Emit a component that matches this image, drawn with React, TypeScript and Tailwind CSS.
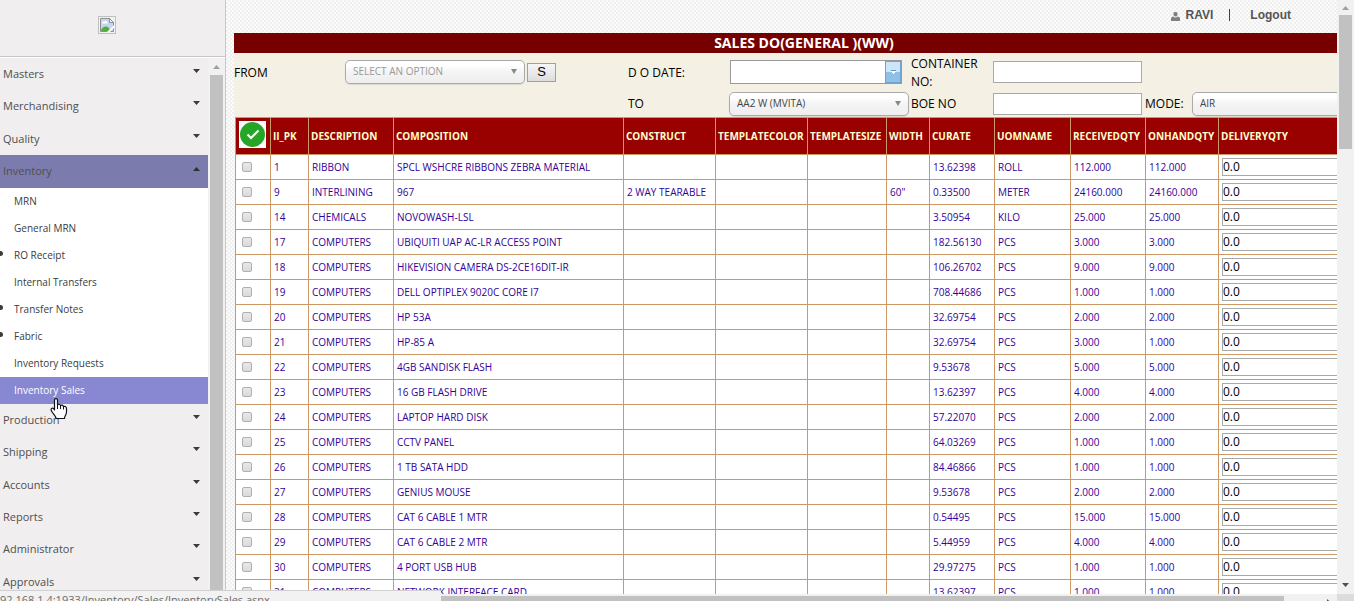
import React from "react";

const topMenu = ["Masters", "Merchandising", "Quality"];
const bottomMenu = ["Production", "Shipping", "Accounts", "Reports", "Administrator", "Approvals"];
const inventoryMenu = [
  { label: "MRN" },
  { label: "General MRN" },
  { label: "RO Receipt", dot: true },
  { label: "Internal Transfers" },
  { label: "Transfer Notes", dot: true },
  { label: "Fabric", dot: true },
  { label: "Inventory Requests" },
  { label: "Inventory Sales", active: true },
];

const columns = [
  { name: "II_PK", width: "w-[38px]" },
  { name: "DESCRIPTION", width: "w-[85px]" },
  { name: "COMPOSITION", width: "w-[230px]" },
  { name: "CONSTRUCT", width: "w-[92px]" },
  { name: "TEMPLATECOLOR", width: "w-[92px]" },
  { name: "TEMPLATESIZE", width: "w-[79px]" },
  { name: "WIDTH", width: "w-[43px]" },
  { name: "CURATE", width: "w-[65px]" },
  { name: "UOMNAME", width: "w-[76px]" },
  { name: "RECEIVEDQTY", width: "w-[75px]" },
  { name: "ONHANDQTY", width: "w-[73px]" },
  { name: "DELIVERYQTY", width: "w-[180px]" },
];

const rows: string[][] = [
  ["1", "RIBBON", "SPCL WSHCRE RIBBONS ZEBRA MATERIAL", "", "", "", "", "13.62398", "ROLL", "112.000", "112.000"],
  ["9", "INTERLINING", "967", "2 WAY TEARABLE", "", "", '60"', "0.33500", "METER", "24160.000", "24160.000"],
  ["14", "CHEMICALS", "NOVOWASH-LSL", "", "", "", "", "3.50954", "KILO", "25.000", "25.000"],
  ["17", "COMPUTERS", "UBIQUITI UAP AC-LR ACCESS POINT", "", "", "", "", "182.56130", "PCS", "3.000", "3.000"],
  ["18", "COMPUTERS", "HIKEVISION CAMERA DS-2CE16DIT-IR", "", "", "", "", "106.26702", "PCS", "9.000", "9.000"],
  ["19", "COMPUTERS", "DELL OPTIPLEX 9020C CORE I7", "", "", "", "", "708.44686", "PCS", "1.000", "1.000"],
  ["20", "COMPUTERS", "HP 53A", "", "", "", "", "32.69754", "PCS", "2.000", "2.000"],
  ["21", "COMPUTERS", "HP-85 A", "", "", "", "", "32.69754", "PCS", "3.000", "1.000"],
  ["22", "COMPUTERS", "4GB SANDISK FLASH", "", "", "", "", "9.53678", "PCS", "5.000", "5.000"],
  ["23", "COMPUTERS", "16 GB FLASH DRIVE", "", "", "", "", "13.62397", "PCS", "4.000", "4.000"],
  ["24", "COMPUTERS", "LAPTOP HARD DISK", "", "", "", "", "57.22070", "PCS", "2.000", "2.000"],
  ["25", "COMPUTERS", "CCTV PANEL", "", "", "", "", "64.03269", "PCS", "1.000", "1.000"],
  ["26", "COMPUTERS", "1 TB SATA HDD", "", "", "", "", "84.46866", "PCS", "1.000", "1.000"],
  ["27", "COMPUTERS", "GENIUS MOUSE", "", "", "", "", "9.53678", "PCS", "2.000", "2.000"],
  ["28", "COMPUTERS", "CAT 6 CABLE 1 MTR", "", "", "", "", "0.54495", "PCS", "15.000", "15.000"],
  ["29", "COMPUTERS", "CAT 6 CABLE 2 MTR", "", "", "", "", "5.44959", "PCS", "4.000", "4.000"],
  ["30", "COMPUTERS", "4 PORT USB HUB", "", "", "", "", "29.97275", "PCS", "1.000", "1.000"],
  ["31", "COMPUTERS", "NETWORK INTERFACE CARD", "", "", "", "", "13.62397", "PCS", "1.000", "1.000"],
];

function Triangle({ up = false, className = "" }: { up?: boolean; className?: string }) {
  return (
    <svg viewBox="0 0 7 4" className={`h-1 w-[7px] shrink-0 fill-current ${className}`} aria-hidden="true">
      <path d={up ? "M0 4L3.5 0L7 4Z" : "M0 0H7L3.5 4Z"} />
    </svg>
  );
}

function MenuItem({ label }: { label: string }) {
  return (
    <a href="#" className="flex items-center justify-between pr-2 pl-[3px] text-[11px] text-[#4f4f4f]">
      {label}
      <Triangle className="mb-1.5 text-[#3c3c3c]" />
    </a>
  );
}

function Picker({ id, value, muted = false }: { id: string; value: string; muted?: boolean }) {
  return (
    <div className="relative w-[180px] shrink-0">
      <select
        id={id}
        className={`block h-6 w-full appearance-none rounded-[5px] border border-[#aaaaaa] bg-linear-to-b from-white from-20% via-[#f4f4f4] via-50% to-[#eeeeee] pr-6 pb-0.5 pl-[7px] font-['Open_Sans',sans-serif] text-[10px] shadow-[0_1px_1px_rgba(0,0,0,0.1)] ${muted ? "text-[#999999]" : "text-[#444444]"}`}
      >
        <option>{value}</option>
      </select>
      <svg width="6" height="5" viewBox="0 0 6 5" className="pointer-events-none absolute top-[9px] right-2 fill-[#888888]" aria-hidden="true">
        <path d="M0 0H6L3 5Z" />
      </svg>
    </div>
  );
}

function BrokenImage() {
  return (
    <svg width="18" height="18" viewBox="0 0 18 18" role="img" aria-label="Logo">
      <rect x="0.5" y="0.5" width="17" height="17" fill="#f3f2f3" stroke="#c0c0c0" />
      <path d="M2.500 2.500H11.500L15.500 6.500V15.500H2.500Z" fill="#c3d7f5" stroke="#8f8f8f" />
      <path d="M4 7.500C4 5.500 6 5 6.500 5.500C8 4 10 5.500 9.500 7.500Z" fill="#fff" />
      <path d="M3 15C3.500 11 8 9.500 10.500 11.500L13 15Z" fill="#55ab3b" />
      <path d="M11.500 2.500V6.500H15.500Z" fill="#fff" stroke="#8f8f8f" />
      <path d="M9 16L16 9V12L12 16Z" fill="#f8f8f8" />
    </svg>
  );
}

function HandCursor() {
  return (
    <svg width="18" height="22" viewBox="0 0 18 22" className="pointer-events-none absolute top-[398px] left-[50px] z-20" aria-hidden="true">
      <path
        d="M4.500 12V2C4.500 .2 7.500 .2 7.500 2V7C8 5.800 10.300 6 10.500 7.800C11.200 6.600 13.300 7 13.500 8.800C14.300 7.800 16.500 8.400 16.500 10.500V14C16.500 17 14.500 17.500 14.500 20.500H6C6 18 3.500 16.500 1.500 13C.3 10.800 2 9.500 3.500 10.500L4.500 12Z"
        fill="#fff"
        stroke="#101020"
        strokeWidth="1.200"
        strokeLinejoin="round"
      />
      <path d="M7.500 7V11M10.500 8V11M13.500 9V11.500" stroke="#101020" fill="none" />
    </svg>
  );
}

function Sidebar() {
  return (
    <aside className="flex w-[226px] shrink-0 flex-col overflow-hidden border-r border-[#c6c6c6] bg-[#f0eeef]">
      <div className="flex h-[57px] shrink-0 items-center justify-center border-b border-[#c6c6c6] pr-[11px] pb-1.5">
        <BrokenImage />
      </div>
      <div className="flex min-h-0 flex-1 border-t border-white">
        <nav className="min-w-0 flex-1">
          <div className="grid h-[97px] grid-rows-3">
            {topMenu.map((m) => (
              <MenuItem key={m} label={m} />
            ))}
          </div>
          <a href="#" className="flex h-[33px] items-center justify-between bg-[#7b7bad] pr-2 pl-[3px] text-[11px] text-[#4f4f4f]">
            Inventory
            <Triangle up className="mb-1.5 text-[#2f2f2f]" />
          </a>
          <ul className="bg-white">
            {inventoryMenu.map((m) => (
              <li
                key={m.label}
                className={`flex h-[27px] items-center text-[10px] ${m.active ? "bg-[#8888d2] text-white" : "text-[#3c3c3c]"}`}
              >
                <span className={`mb-1 h-[5px] w-[3px] rounded-r-full ${m.dot ? "bg-[#3c3c3c]" : ""}`} />
                <a href="#" className="pl-[11px]">
                  {m.label}
                </a>
              </li>
            ))}
          </ul>
          <div className="grid h-[194px] grid-rows-6">
            {bottomMenu.map((m) => (
              <MenuItem key={m} label={m} />
            ))}
          </div>
        </nav>
        <div className="flex w-[17px] shrink-0 flex-col items-center bg-[#f1f1f1]">
          <div className="flex h-[17px] shrink-0 items-center">
            <Triangle up className="text-[#a0a0a0]" />
          </div>
          <div className="w-[13px] flex-1 bg-[#c1c1c1]" />
        </div>
      </div>
    </aside>
  );
}

function OrderForm() {
  const box = "border border-[#a9a9a9] bg-white";
  return (
    <form className="grid w-[1140px] grid-cols-[111px_283px_101px_182px_82px_152px_47px_180px] grid-rows-[38px_26px] items-center bg-[#f4f1e4] text-[12px] leading-[18px] text-black">
      <label htmlFor="from" className="pt-0.5">FROM</label>
      <div className="flex items-center gap-0.5">
        <Picker id="from" value="SELECT AN OPTION" muted />
        <button type="button" className="h-[19px] w-[29px] border border-[#a0a0a0] bg-linear-to-b from-[#f6f6f6] to-[#dddddd] font-['Liberation_Sans',sans-serif] text-[13px] leading-4">
          S
        </button>
      </div>
      <label htmlFor="dodate" className="pt-0.5">D O DATE:</label>
      <div className="ml-px flex h-6 w-[172px] border border-[#9a9a9a] bg-white">
        <input id="dodate" className="min-w-0 flex-1 px-1 outline-none" />
        <button type="button" aria-label="Open calendar" className="flex w-4 items-center justify-center border border-[#6fa3cf] bg-linear-to-b from-[#cbe6f9] from-50% to-[#8fc0e6] to-50%">
          <svg width="5" height="5" viewBox="0 0 5 5" className="shrink-0" aria-hidden="true">
            <path d="M0 0H5V1H0Z" fill="#5b93c4" />
            <path d="M0 1H5V2H4V3H3V4H2V3H1V2H0Z" fill="#fff" />
          </svg>
        </button>
      </div>
      <label htmlFor="container" className="pt-0.5">CONTAINER NO:</label>
      <input id="container" className={`h-[22px] w-[149px] px-1 ${box}`} />
      <span className="col-span-2" />
      <span className="col-span-2" />
      <label htmlFor="to">TO</label>
      <Picker id="to" value="AA2 W (MVITA)" />
      <label htmlFor="boe">BOE NO</label>
      <input id="boe" className={`h-[22px] w-[149px] px-1 ${box}`} />
      <label htmlFor="mode">MODE:</label>
      <Picker id="mode" value="AIR" />
    </form>
  );
}

function StockTable() {
  const line = "border border-[#cc9966]";
  return (
    <table className="ml-px w-[1163px] table-fixed border-collapse bg-white text-[10px] leading-4 text-[#330099]">
      <colgroup>
        <col className="w-[35px]" />
        {columns.map((c) => (
          <col key={c.name} className={c.width} />
        ))}
      </colgroup>
      <thead>
        <tr className="h-[37px] bg-[#990000] text-left text-[#ffffcc]">
          <th className={`${line} pl-[3px]`}>
            <button type="button" aria-label="Select all" className="mb-1 block bg-white">
              <svg width="27" height="27" viewBox="0 0 27 27" aria-hidden="true">
                <circle cx="13.500" cy="13.500" r="12.500" fill="#26a626" />
                <path d="M8.500 13.500L12 17L19.500 9.500" fill="none" stroke="#fff" strokeWidth="2" />
              </svg>
            </button>
          </th>
          {columns.map((c) => (
            <th key={c.name} className={`${line} pl-0.5 font-bold whitespace-nowrap`}>
              {c.name}
            </th>
          ))}
        </tr>
      </thead>
      <tbody>
        {rows.map((r) => (
          <tr key={r[0]} className="h-[25px]">
            <td className={`${line} pl-1.5`}>
              <input
                type="checkbox"
                aria-label={`Select item ${r[0]}`}
                className="block size-[10px] appearance-none rounded-[2px] border border-[#b0b0b0] bg-linear-to-b from-[#e8e8e8] to-[#dadada]"
              />
            </td>
            {r.map((cell, i) => (
              <td key={i} className={`${line} pl-[3px] whitespace-nowrap`}>
                {cell}
              </td>
            ))}
            <td className={`${line} pl-[3px]`}>
              <input
                aria-label={`Delivery quantity ${r[0]}`}
                defaultValue="0.0"
                className="block h-[18px] w-[150px] border border-[#a9a9a9] bg-white pb-0.5 text-[12px] text-black"
              />
            </td>
          </tr>
        ))}
      </tbody>
    </table>
  );
}

export default function App() {
  return (
    <div className="relative flex h-screen flex-col overflow-hidden bg-white font-['Open_Sans',sans-serif]">
      <div className="flex min-h-0 flex-1">
        <Sidebar />
        <main className="min-w-0 flex-1 overflow-hidden bg-[#fafafa] bg-[repeating-conic-gradient(#f0f0f0_0_25%,#fbfbfb_0_50%)] bg-size-[4px_4px] pl-2">
          <header className="flex h-[33px] items-center justify-end pr-[46px] pb-[3px] font-['Liberation_Sans',sans-serif] text-[12px] font-bold text-[#555555]">
            <svg width="9" height="9" viewBox="0 0 9 9" className="mt-0.5 mr-1.5" fill="#808080" aria-hidden="true">
              <path d="M2.500 1Q2.500 0 4.500 0T6.500 1V3Q6 4.500 4.500 4.500T2.500 3Z" />
              <path d="M0 9V6.500Q0 5 2 4.500Q4.500 6.500 7 4.500Q9 5 9 6.500V9Z" />
            </svg>
            <span>RAVI</span>
            <span className="mx-4 h-3 w-px bg-[#444444]" />
            <a href="#" className="ml-1">Logout</a>
          </header>
          <h1 className="bg-[#760000] pl-[37px] text-center text-[14px] leading-5 font-bold text-white">
            SALES DO(GENERAL )(WW)
          </h1>
          <OrderForm />
          <StockTable />
        </main>
        <div className="flex w-[17px] shrink-0 flex-col items-center bg-[#f1f1f1]">
          <div className="flex h-[15px] shrink-0 items-center">
            <Triangle up className="text-[#a0a0a0]" />
          </div>
          <div className="h-[134px] w-[13px] bg-[#c1c1c1]" />
          <Triangle className="mt-auto mb-[7px] text-[#505050]" />
        </div>
      </div>
      <div className="flex h-[7px] shrink-0 overflow-hidden bg-[#f1f1f1] pl-[226px]">
        <div className="mt-0.5 mr-[43px] flex-1 bg-[#c1c1c1]" />
        <div className="w-[10px] pt-[5px]">
          <svg width="4" height="7" viewBox="0 0 4 7" fill="#505050" aria-hidden="true">
            <path d="M0 0L4 3.500L0 7Z" />
          </svg>
        </div>
        <div className="w-[17px] bg-[#dcdcdc]" />
      </div>
      <div className="absolute bottom-0 left-0 z-10 flex h-[11px] w-[441px] items-start overflow-hidden border-t border-[#d0d0d0] bg-[#f2f2f2] text-[11px] leading-[18px] text-[#6a6a6a]">
        <span>92.168.1.4:1933/Inventory/Sales/InventorySales.aspx</span>
      </div>
      <HandCursor />
    </div>
  );
}
